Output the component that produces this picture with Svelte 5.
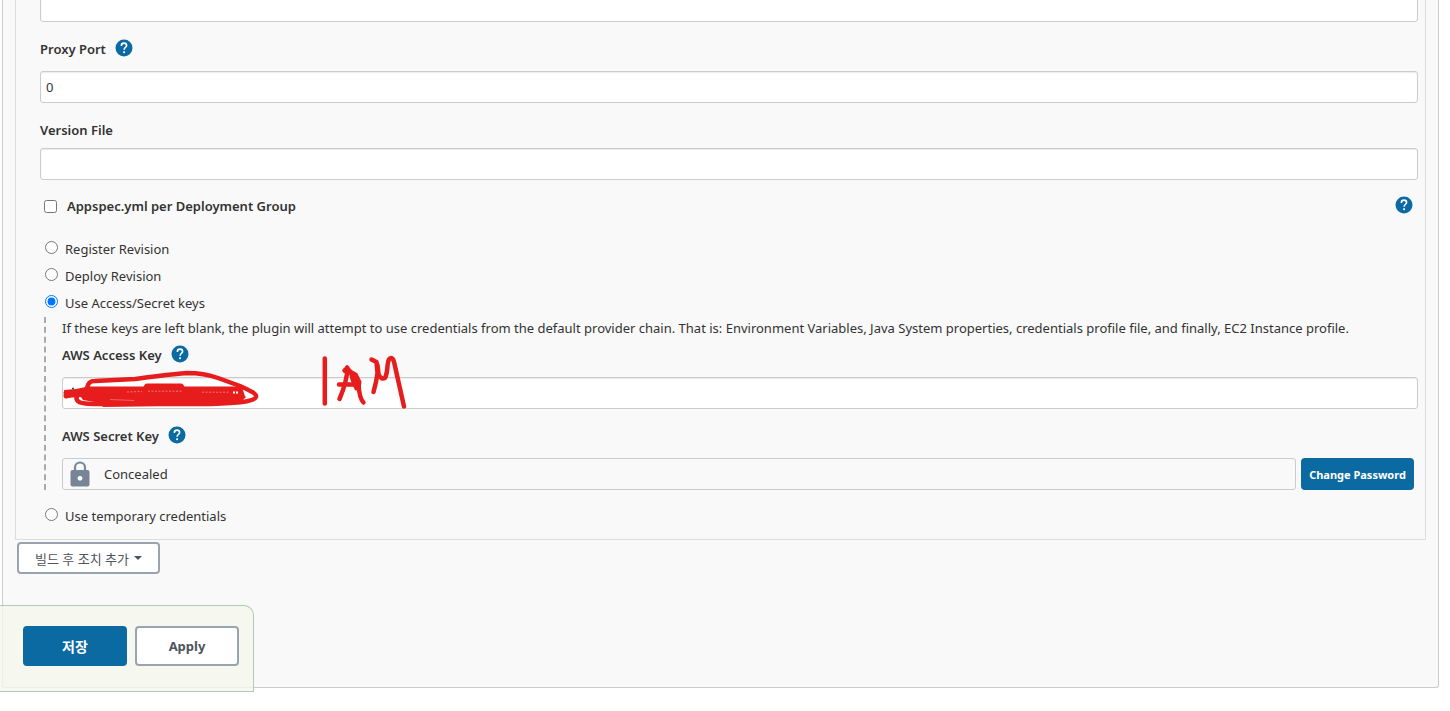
<script>
  let port = $state('0');
  let versionFile = $state('');
  let proxyHost = $state('');
  let accessKey = $state('');
  let perGroup = $state(false);
  let mode = $state('keys');
</script>

{#snippet help(topic)}
  <button type="button" class="help" aria-label={`Help for ${topic}`}>
    <svg viewBox="0 0 18 18" width="18" height="18" aria-hidden="true">
      <circle cx="9" cy="9" r="8.5" fill="#0b6aa2" />
      <path d="M6.4 7V6.5A2.6 2.4 0 0 1 11.6 6.5C11.6 8.2 9.1 8.4 9.1 10.8" fill="none" stroke="#fff" stroke-width="1.6" />
      <rect x="8.2" y="12.3" width="1.8" height="1.8" fill="#fff" />
    </svg>
  </button>
{/snippet}

{#snippet choice(value, text)}
  <label class="choice">
    <input type="radio" name="mode" {value} bind:group={mode} />
    <span>{text}</span>
  </label>
{/snippet}

<main>
  <form class="panel" onsubmit={(e) => e.preventDefault()}>
    <section class="step">
      <input class="text" type="text" aria-label="Proxy Host" bind:value={proxyHost} />

      <div class="caption">
        <label for="port">Proxy Port</label>
        {@render help('Proxy Port')}
      </div>
      <input id="port" class="text" type="text" bind:value={port} />

      <div class="caption short">
        <label for="version">Version File</label>
      </div>
      <input id="version" class="text" type="text" bind:value={versionFile} />

      <div class="check">
        <input id="group" type="checkbox" bind:checked={perGroup} />
        <label for="group">Appspec.yml per Deployment Group</label>
        {@render help('Appspec.yml per Deployment Group')}
      </div>

      {@render choice('register', 'Register Revision')}
      {@render choice('deploy', 'Deploy Revision')}
      {@render choice('keys', 'Use Access/Secret keys')}

      <div class="nested">
        <p>If these keys are left blank, the plugin will attempt to use credentials from the default provider chain. That is: Environment Variables, Java System properties, credentials profile file, and finally, EC2 Instance profile.</p>
        <div class="caption tight">
          <label for="access">AWS Access Key</label>
          {@render help('AWS Access Key')}
        </div>
        <div class="marked">
          <input id="access" class="text" type="text" bind:value={accessKey} />
          <svg class="ink" viewBox="60 350 350 62" width="350" height="62" aria-hidden="true">
            <g fill="none" stroke="#e71d1d" stroke-linecap="round" stroke-linejoin="round">
              <path stroke-width="4.5" d="M87 391C87 384 89 381 95 381L135 379C154 377 170 374 187 373C198 373 207 374 218 378L240 386C251 391 257 394 256 397C254 402 237 403 211 404L108 404C87 404 79 404 77 400C75 396 79 392 88 389" />
              <path stroke-width="5" d="M66 396L79 392L88 389L145 389L147 386H181L183 389H240L242 395M66 393H80" />
              <path stroke-width="4.5" d="M324.8 358.5V403.5" />
              <path stroke-width="4.5" d="M339.5 399C343 391 347 380 347.5 368L344.5 370.5M347 367.5C352 374 356 378 358.5 384C359 393 360 399 363.5 402.5M339 384.5H358" />
              <path stroke-width="3" fill="#e71d1d" d="M350 371L356 374L360 382L359 388L356 389L352 380Z" />
              <path stroke-width="4.5" d="M371.5 359.5L376.5 362L377.5 373L376 382L373.5 392M377.5 365L378.5 374Q381 380 385 378Q387 374 387.5 366Q388 358 391 358Q393.5 358 394.5 364L404 406.5" />
            </g>
            <path fill="#e71d1d" d="M64 390L76 389L86 387L241 387L243 394L246 397L241 402L214 405L103 407L100 403L83 400L81 397L65 398Z" />
            <path fill="none" stroke="#fff" stroke-width="0.8" stroke-dasharray="2 1.5" d="M127 392L142 391.5M148 391.2H182M202 392.2H230" opacity=".5" />
            <path fill="none" stroke="#fff" stroke-width="0.6" d="M110 399.500L134 400.500" opacity=".5" />
            <path fill="none" stroke="#fff" stroke-width="2" stroke-dasharray="2 1" d="M233 392.5H238" />
            <path fill="none" stroke="#444" stroke-width="1.5" d="M72 388.500H74" />
          </svg>
        </div>
        <div class="caption">
          <label for="secret">AWS Secret Key</label>
          {@render help('AWS Secret Key')}
        </div>
        <div class="secret">
          <output id="secret" class="concealed">
            <svg viewBox="0 0 20 26" width="20" height="26" aria-hidden="true">
              <path d="M5 10V6.5a5 5 0 0 1 10 0V10" fill="none" stroke="#788596" stroke-width="2.2" />
              <rect x="0.5" y="9" width="19" height="16.5" rx="2" fill="#788596" />
              <circle cx="10" cy="17.3" r="2.4" fill="#fff" />
            </svg>
            Concealed
          </output>
          <button type="button" class="primary change">Change Password</button>
        </div>
      </div>

      {@render choice('temporary', 'Use temporary credentials')}
    </section>

    <button type="button" class="plain add">빌드 후 조치 추가 <i></i></button>

    <div class="actions">
      <button type="submit" class="primary">저장</button>
      <button type="button" class="plain">Apply</button>
    </div>
  </form>
</main>

<style>
  :global(body) {
    background: #fff;
  }
  * {
    box-sizing: border-box;
  }
  main {
    margin-top: -10px;
    padding: 0 11px 24px 2px;
    color: #333;
    font: 13px/20px "Noto Sans", "Noto Sans CJK KR", sans-serif;
  }
  button,
  input {
    font-family: inherit;
    color: inherit;
  }
  .panel {
    position: relative;
    padding: 0 12px 113px;
    border: 1px solid #ccc;
    border-top: 0;
    border-radius: 0 0 3px 3px;
    background: #f9f9f9;
  }
  .step {
    padding: 0 7px 10px 24px;
    border: 1px solid #ddd;
    border-top: 0;
  }
  .text {
    display: block;
    width: 100%;
    height: 32px;
    padding: 0 5px;
    border: 1px solid #ccc;
    border-radius: 3px;
    background: #fff;
    box-shadow: inset 0 1px 1px rgba(0, 0, 0, 0.08);
    font-size: 13px;
  }
  .caption {
    display: flex;
    align-items: center;
    gap: 9px;
    height: 49px;
    padding-top: 4px;
    font-weight: 600;
  }
  .short {
    height: 45px;
    padding-top: 8px;
  }
  .tight {
    height: 38px;
    padding: 0 0 6px;
  }
  .help {
    width: 18px;
    height: 18px;
    margin-bottom: 2px;
    padding: 0;
    border: 0;
    background: none;
  }
  .help svg {
    display: block;
  }
  .check {
    display: flex;
    align-items: center;
    height: 55px;
    padding: 0 5px 3px 4px;
    font-weight: 600;
  }
  .check input {
    width: 13px;
    height: 13px;
    margin: 0 10px 0 0;
  }
  .check .help {
    margin-left: auto;
  }
  .choice {
    display: flex;
    align-items: center;
    gap: 7px;
    height: 27px;
    padding-left: 5px;
  }
  .choice input {
    width: 13px;
    height: 13px;
    margin: 0 0 3px;
  }
  .nested {
    margin: 1px 0 12px 4px;
    padding-left: 16px;
    border-left: 2px dashed #aaa;
  }
  p {
    margin: 0;
    line-height: 22px;
  }
  .marked {
    position: relative;
  }
  .ink {
    position: absolute;
    top: -27px;
    left: -2px;
    pointer-events: none;
  }
  .secret {
    display: flex;
    gap: 5px;
    padding-right: 4px;
  }
  .concealed {
    flex: 1;
    display: flex;
    align-items: center;
    gap: 14px;
    height: 32px;
    padding: 0 7px;
    border: 1px solid #ccc;
    border-radius: 3px;
  }
  .primary,
  .plain {
    padding: 0;
    border: 2px solid #0b6aa2;
    border-radius: 4px;
    background: #0b6aa2;
    color: #fff;
    font-size: 13px;
    font-weight: 700;
  }
  .plain {
    border-color: #98a5b1;
    background: #fff;
    color: #4d545d;
  }
  .change {
    width: 113px;
    font-size: 11px;
  }
  .add {
    display: flex;
    align-items: center;
    justify-content: center;
    gap: 5px;
    width: 143px;
    height: 32px;
    margin: 2px 0 0 2px;
    font-size: 13px;
    font-weight: 400;
  }
  .add i {
    border: 4px solid transparent;
    border-top-color: #4d545d;
    border-bottom: 0;
  }
  .actions {
    position: absolute;
    left: -3px;
    bottom: -5px;
    display: flex;
    gap: 8px;
    width: 254px;
    height: 87px;
    padding: 20px 14px 0 23px;
    border: 1px solid #aaccb8;
    border-left: 0;
    border-top-right-radius: 10px;
    background: rgba(245, 248, 238, 0.8);
  }
  .actions button {
    flex: 1;
    height: 40px;
  }
  .actions .primary {
    font-size: 14px;
  }
</style>
